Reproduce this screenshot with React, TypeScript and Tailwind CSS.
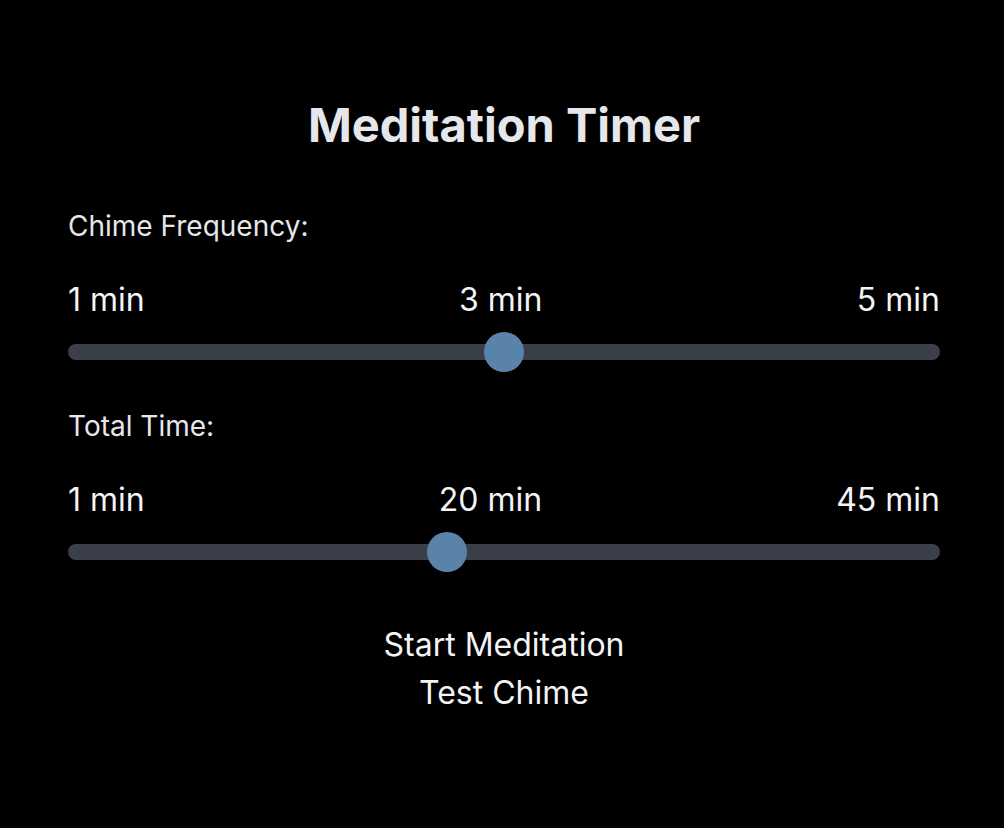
import React, { useState } from "react";

interface SliderProps {
  label: string;
  min: number;
  max: number;
  value: number;
}

const Slider: React.FC<SliderProps> = ({ label, min, max, value }) => {
  const pct = (value - min) / (max - min);
  return (
    <div className="flex flex-col">
      <label className="text-[28px] leading-[32px] text-gray-200">{label}</label>
      <div className="mt-[38px] flex justify-between text-[32px] leading-[40px] text-gray-100">
        <span>{min} min</span>
        <span>{value} min</span>
        <span>{max} min</span>
      </div>
      {/* track */}
      <div className="relative mt-[12px] h-[40px]">
        <div className="absolute left-0 right-0 top-[12px] h-[16px] rounded-full bg-[#3a3f4a]" />
        <div
          className="absolute top-0 h-[40px] w-[40px] rounded-full bg-[#5b83a9]"
          style={{ left: `calc(${pct} * (100% - 40px))` }}
        />
      </div>
    </div>
  );
};

export default function App() {
  const [running, setRunning] = useState(false);

  return (
    <div
      className="min-h-screen w-full bg-black pl-[68px] pr-[64px] pt-[97px]"
      style={{ fontFamily: "Inter, 'Noto Sans', sans-serif" }}
    >
      <h1 className="text-center text-[47px] font-bold leading-[56px] text-gray-200">
        Meditation Timer
      </h1>

      <div className="mt-[57px] flex flex-col gap-[38px]">
        <Slider label="Chime Frequency:" min={1} max={5} value={3} />
        <Slider label="Total Time:" min={1} max={45} value={20} />
      </div>

      <div className="mt-[49px] flex flex-col items-center text-[32px] leading-[48px] text-gray-100">
        <button onClick={() => setRunning(!running)}>Start Meditation</button>
        <button>Test Chime</button>
      </div>
    </div>
  );
}
